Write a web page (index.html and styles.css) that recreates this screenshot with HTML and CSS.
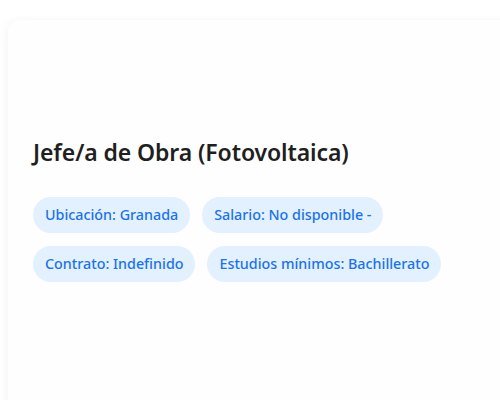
FILE: index.html
```html
<!DOCTYPE html>
<html lang="es">
<head>
<meta charset="utf-8">
<link rel="stylesheet" href="styles.css">
</head>
<body>
<div class="card">
  <div class="media"></div>
  <h1 class="title">Jefe/a de Obra (Fotovoltaica)</h1>
  <div class="tags">
    <span class="tag">Ubicación: Granada</span>
    <span class="tag">Salario: No disponible -</span>
    <span class="tag">Contrato: Indefinido</span>
    <span class="tag">Estudios mínimos: Bachillerato</span>
  </div>
</div>
</body>
</html>
```
FILE: styles.css
```css
html, body {
  margin: 0;
  background: #ffffff;
  overflow: hidden;
  height: 400px;
}
body {
  padding: 20px 0 0 8px;
  font-family: "Noto Sans", "Open Sans", sans-serif;
}
.card {
  width: 560px;
  height: 500px;
  background: #fefefe;
  border-radius: 12px;
  box-shadow: 0 2px 12px rgba(0, 0, 0, 0.06);
  padding: 0 25px;
  box-sizing: border-box;
}
.media {
  height: 117px;
}
.title {
  margin: 0;
  font-size: 23px;
  font-weight: 600;
  line-height: 30px;
  letter-spacing: -0.1px;
  color: #1f1f1f;
}
.tags {
  display: flex;
  flex-wrap: wrap;
  gap: 13px 12px;
  width: 420px;
  margin-top: 30px;
}
.tag {
  background: #e3f0fd;
  color: #1a73e8;
  font-size: 14.3px;
  font-weight: 500;
  line-height: 20px;
  padding: 8px 12px;
  border-radius: 18px;
}
```
